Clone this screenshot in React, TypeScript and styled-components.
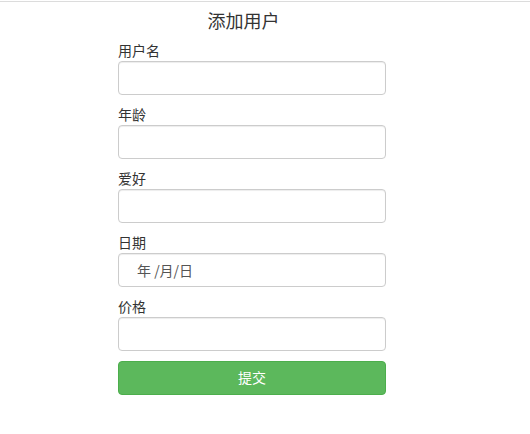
import React from "react";
import styled, { createGlobalStyle } from "styled-components";

const Global = createGlobalStyle`
  html, body { margin: 0; padding: 0; background: #fff; }
  body {
    font-family: "Microsoft YaHei", "Noto Sans CJK SC", "Liberation Sans", sans-serif;
    color: #333;
    font-size: 14px;
  }
  * { box-sizing: border-box; }
`;

const TopRule = styled.div`
  margin-top: 1px;
  border-top: 1px solid #dcdcdc;
`;

const Form = styled.form`
  width: 268px;
  margin: 0 0 0 118px;
  display: flex;
  flex-direction: column;
`;

const Title = styled.h3`
  margin: 7px 0 0;
  padding-right: 17px;
  font-size: 18px;
  line-height: 22px;
  font-weight: 400;
  text-align: center;
  color: #333;
`;

const Group = styled.div`
  display: flex;
  flex-direction: column;
  margin-top: 10px;
`;

const Label = styled.label`
  font-size: 14px;
  line-height: 18px;
  margin-bottom: 2px;
  color: #333;
`;

const Input = styled.input`
  height: 34px;
  width: 100%;
  border: 1px solid #ccc;
  border-radius: 4px;
  box-shadow: inset 0 1px 1px rgba(0, 0, 0, 0.075);
  padding: 6px 12px;
  font-size: 14px;
  font-family: inherit;
  color: #555;
  outline: none;
  background: #fff;
`;

const DateBox = styled.div`
  height: 34px;
  width: 100%;
  border: 1px solid #ccc;
  border-radius: 4px;
  box-shadow: inset 0 1px 1px rgba(0, 0, 0, 0.075);
  padding: 0 0 1px 18px;
  display: flex;
  align-items: center;
  font-size: 14px;
  color: #555;
  white-space: pre;
`;

const Submit = styled.button`
  margin-top: 10px;
  height: 34px;
  width: 100%;
  border: 1px solid #4cae4c;
  border-radius: 4px;
  background: #5cb85c;
  color: #fff;
  font-size: 14px;
  font-family: inherit;
  padding: 0 0 2px;
  cursor: pointer;
`;

export default function App() {
  return (
    <>
      <Global />
      <TopRule />
      <Form onSubmit={(e) => e.preventDefault()}>
        <Title>添加用户</Title>
        <Group>
          <Label>用户名</Label>
          <Input type="text" />
        </Group>
        <Group>
          <Label>年龄</Label>
          <Input type="text" />
        </Group>
        <Group>
          <Label>爱好</Label>
          <Input type="text" />
        </Group>
        <Group>
          <Label>日期</Label>
          <DateBox>年 /月/日</DateBox>
        </Group>
        <Group>
          <Label>价格</Label>
          <Input type="text" />
        </Group>
        <Submit type="submit">提交</Submit>
      </Form>
    </>
  );
}
